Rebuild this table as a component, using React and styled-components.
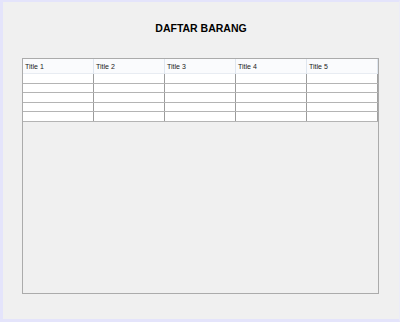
import React from "react";
import styled, { createGlobalStyle } from "styled-components";

const Global = createGlobalStyle`
  html, body { margin: 0; padding: 0; background: #f0f0f0; }
  * { box-sizing: border-box; }
`;

const Frame = styled.div`
  width: 400px;
  height: 322px;
  background: #f0f0f0;
  border-top: 2px solid #e4e4fb;
  border-left: 3px solid #e4e4fb;
  border-bottom: 3px solid #e4e4fb;
  border-right: 1px solid #ececf8;
  padding: 20px 20px 0 19px;
  display: flex;
  flex-direction: column;
  font-family: "Liberation Sans", Arial, sans-serif;
`;

const Title = styled.h1`
  margin: 0;
  height: 12px;
  line-height: 12px;
  font-size: 10.5px;
  font-weight: bold;
  text-align: center;
  color: #000;
  padding-left: 1px;
`;

const Table = styled.div`
  margin-top: 24px;
  height: 236px;
  border: 1px solid #ababab;
  background: #f0f0f0;
  display: flex;
  flex-direction: column;
`;

const HeaderRow = styled.div`
  display: grid;
  grid-template-columns: repeat(5, 1fr);
  height: 15px;
  background: #fafbfd;
  border-bottom: 1px solid #e8ecf2;
`;

const HeaderCell = styled.div`
  border-right: 1px solid #dfe6ef;
  font-size: 7px;
  color: #222;
  line-height: 14px;
  padding: 1px 0 0 2px;
  white-space: nowrap;
`;

const Row = styled.div`
  display: grid;
  grid-template-columns: repeat(5, 1fr);
  height: 9.5px;
  background: #fff;
  border-bottom: 1px solid #b4b4b4;
`;

const Cell = styled.div`
  border-right: 1px solid ${(p) => (p.$last ? "#a0a0a0" : "#9c9c9c")};
`;

const titles = ["Title 1", "Title 2", "Title 3", "Title 4", "Title 5"];

export default function App() {
  return (
    <>
      <Global />
      <Frame>
        <Title>DAFTAR BARANG</Title>
        <Table>
          <HeaderRow>
            {titles.map((t) => (
              <HeaderCell key={t}>{t}</HeaderCell>
            ))}
          </HeaderRow>
          {[0, 1, 2, 3, 4].map((r) => (
            <Row key={r}>
              {titles.map((t, i) => (
                <Cell key={t} $last={i === 4} />
              ))}
            </Row>
          ))}
        </Table>
      </Frame>
    </>
  );
}
